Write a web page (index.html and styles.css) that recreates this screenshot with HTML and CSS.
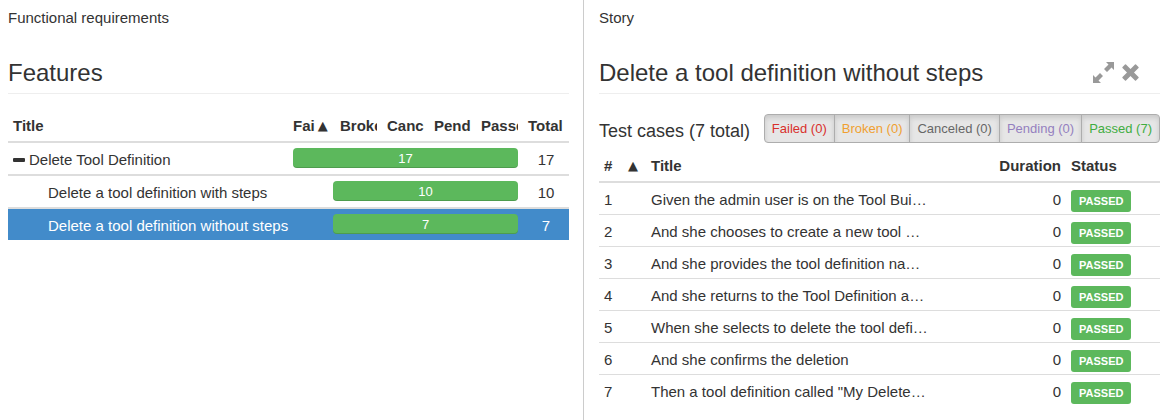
FILE: index.html
```html
<!DOCTYPE html>
<html lang="en">
<head>
<meta charset="utf-8">
<title>Functional requirements</title>
<link rel="stylesheet" href="styles.css">
</head>
<body>
<main class="panes">
  <section class="pane">
    <p class="kind">Functional requirements</p>
    <header class="pane-head"><h1>Features</h1></header>
    <table class="table tree">
      <colgroup><col><col class="count"><col class="count"><col class="count"><col class="count"><col class="count"><col class="total"></colgroup>
      <thead>
        <tr>
          <th>Title</th>
          <th><div class="sorted"><span>Fai</span><span class="arrow">▲</span></div></th>
          <th><div class="clip">Broke</div></th>
          <th><div class="clip">Cance</div></th>
          <th><div class="clip">Pend</div></th>
          <th><div class="clip">Passe</div></th>
          <th>Total</th>
        </tr>
      </thead>
      <tbody>
        <tr>
          <td><div class="node"><svg class="minus" viewBox="0 0 12 4" aria-hidden="true"><rect width="12" height="4" rx="1"/></svg>Delete Tool Definition</div></td>
          <td colspan="5"><div class="bar">17</div></td>
          <td class="num">17</td>
        </tr>
        <tr class="child">
          <td>Delete a tool definition with steps</td>
          <td colspan="5"><div class="bar">10</div></td>
          <td class="num">10</td>
        </tr>
        <tr class="child selected">
          <td>Delete a tool definition without steps</td>
          <td colspan="5"><div class="bar">7</div></td>
          <td class="num">7</td>
        </tr>
      </tbody>
    </table>
  </section>
  <section class="pane detail">
    <p class="kind">Story</p>
    <header class="pane-head">
      <h1>Delete a tool definition without steps</h1>
      <div class="tools">
        <button type="button" aria-label="Expand"><svg width="21" height="21" viewBox="0 0 21 21"><path d="M13 0h8v8l-2.500-2.500-4.500 4.500-3-3L15.500 2.500zM0 13l2.500 2.500L7 11l3 3-4.500 4.500L8 21H0z"/></svg></button>
        <button type="button" aria-label="Close"><svg width="17" height="17" viewBox="0 0 17 17"><path d="M4 .5 8.500 5 13 .5Q13.500 0 14 .5L16.500 3Q17 3.500 16.500 4L12 8.500 16.500 13Q17 13.500 16.500 14L14 16.500Q13.500 17 13 16.500L8.500 12 4 16.500Q3.500 17 3 16.500L.5 14Q0 13.500 .5 13L5 8.500 .5 4Q0 3.500 .5 3L3 .5Q3.500 0 4 .5z"/></svg></button>
      </div>
    </header>
    <div class="cases-head">
      <h2>Test cases (7 total)</h2>
      <div class="filters">
        <button type="button" class="failed">Failed (0)</button>
        <button type="button" class="broken">Broken (0)</button>
        <button type="button" class="canceled">Canceled (0)</button>
        <button type="button" class="pending">Pending (0)</button>
        <button type="button" class="passed">Passed (7)</button>
      </div>
    </div>
    <table class="table cases">
      <colgroup><col class="index"><col><col class="duration"><col class="status"></colgroup>
      <thead>
        <tr><th><div class="sorted wide"><span>#</span><span class="arrow">▲</span></div></th><th>Title</th><th class="right">Duration</th><th>Status</th></tr>
      </thead>
      <tbody>
        <tr><td>1</td><td>Given the admin user is on the Tool Bui…</td><td class="right">0</td><td class="state"><span class="badge">PASSED</span></td></tr>
        <tr><td>2</td><td>And she chooses to create a new tool …</td><td class="right">0</td><td class="state"><span class="badge">PASSED</span></td></tr>
        <tr><td>3</td><td>And she provides the tool definition na…</td><td class="right">0</td><td class="state"><span class="badge">PASSED</span></td></tr>
        <tr><td>4</td><td>And she returns to the Tool Definition a…</td><td class="right">0</td><td class="state"><span class="badge">PASSED</span></td></tr>
        <tr><td>5</td><td>When she selects to delete the tool defi…</td><td class="right">0</td><td class="state"><span class="badge">PASSED</span></td></tr>
        <tr><td>6</td><td>And she confirms the deletion</td><td class="right">0</td><td class="state"><span class="badge">PASSED</span></td></tr>
        <tr><td>7</td><td>Then a tool definition called "My Delete…</td><td class="right">0</td><td class="state"><span class="badge">PASSED</span></td></tr>
      </tbody>
    </table>
  </section>
</main>
</body>
</html>
```
FILE: styles.css
```css
* { box-sizing: border-box; }
body {
  margin: 0;
  background: #fff;
  color: #333;
  font: 15px/21px "Liberation Sans", Arial, sans-serif;
}
h1, h2, p { margin: 0; font-weight: 400; }
button { font: inherit; cursor: pointer; }

.panes {
  display: grid;
  grid-template-columns: 1fr 1fr;
  min-height: 100vh;
}
.pane { min-width: 0; padding: 7px 14px 0 8px; }
.detail { border-left: 1px solid #ccc; padding: 7px 6px 0 15px; }

.pane-head {
  display: flex;
  align-items: center;
  justify-content: space-between;
  margin-top: 30px;
  padding-bottom: 6px;
  border-bottom: 1px solid #eee;
}
.pane-head h1 { font-size: 24px; line-height: 29px; }
.tools { display: flex; align-items: center; gap: 8px; margin-right: 21px; }
.tools button { display: flex; padding: 0; border: 0; background: none; }
.tools svg { fill: #999; }

.table { width: 100%; table-layout: fixed; border-collapse: separate; border-spacing: 0; }
.table th, .table td {
  padding: 5px;
  text-align: left;
  vertical-align: top;
  white-space: nowrap;
}
.table th { border-bottom: 2px solid #ddd; }
.table .right { text-align: right; }

.tree { margin-top: 16px; }
.tree .count { width: 47px; }
.tree .total { width: 46px; }
.tree td { padding-top: 6px; padding-bottom: 4px; border-bottom: 2px solid #ddd; }
.tree tr:last-child td { border-bottom: 0; }
.tree thead tr:last-child th { border-bottom: 2px solid #ddd; }
.tree .num { text-align: center; }
.tree .child td:first-child { padding-left: 40px; }
.tree .child .bar { margin-left: 40px; }
.tree .selected { background: #428bca; color: #fff; }
.node { display: flex; align-items: center; gap: 4px; }
.minus { width: 12px; height: 4px; fill: #333; }
.clip { overflow: hidden; }
.sorted { display: flex; gap: 3px; }
.sorted.wide { justify-content: space-between; padding-right: 3px; }
.arrow { font-family: "DejaVu Sans", sans-serif; font-size: 13px; }
.bar {
  height: 20px;
  border-radius: 4px;
  background: #5cb85c;
  box-shadow: inset 0 -1px 0 rgba(0, 0, 0, .15);
  color: #fff;
  font-size: 13px;
  line-height: 21px;
  text-align: center;
}
.tree td[colspan] { padding-top: 5px; }

.cases-head {
  display: flex;
  align-items: center;
  justify-content: space-between;
  margin-top: 20px;
}
.cases-head h2 { font-size: 18px; line-height: 21px; margin-top: 6px; }
.filters { display: flex; }
.filters button {
  margin-left: -1px;
  padding: 5px 7px;
  border: 1px solid #adadad;
  background: #e6e6e6;
  box-shadow: inset 0 3px 5px rgba(0, 0, 0, .125);
  font-size: 13px;
  line-height: 17px;
  white-space: nowrap;
}
.filters button:first-child { border-radius: 4px 0 0 4px; }
.filters button:last-child { border-radius: 0 4px 4px 0; }
.filters .failed { color: #d9302c; }
.filters .broken { color: #f0a030; }
.filters .canceled { color: #666; }
.filters .pending { color: #9480bf; }
.filters .passed { color: #41ad41; }

.cases { margin-top: 7px; }
.cases .index { width: 47px; }
.cases .duration { width: 72px; }
.cases .status { width: 94px; }
.cases td { padding-top: 6px; padding-bottom: 4px; border-bottom: 1px solid #ddd; }
.cases .state { padding-top: 7px; padding-bottom: 2px; }
.cases tr:last-child td { border-bottom: 0; }
.badge {
  display: block;
  width: max-content;
  padding: 0 8px;
  border-radius: 3px;
  background: #5cb85c;
  color: #fff;
  font-size: 11px;
  font-weight: 700;
  line-height: 22px;
}
```
